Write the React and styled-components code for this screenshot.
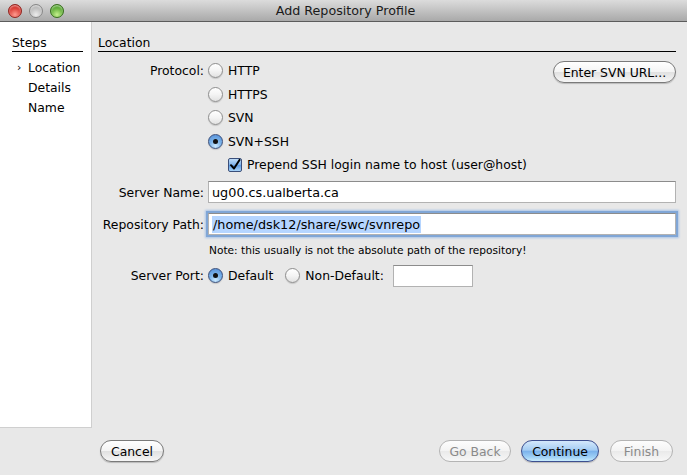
import React from "react";
import styled, { createGlobalStyle } from "styled-components";

const Global = createGlobalStyle`
  html, body { margin: 0; padding: 0; background: #e8e8e8; }
  body { font-family: "DejaVu Sans", "Liberation Sans", sans-serif; font-size: 12.4px; color: #000; }
  * { box-sizing: border-box; }
`;

const Window = styled.div`
  width: 687px;
  height: 475px;
  display: flex;
  flex-direction: column;
  background: #e8e8e8;
  overflow: hidden;
`;

const TitleBar = styled.div`
  height: 22px;
  flex: none;
  display: flex;
  align-items: center;
  background: linear-gradient(#dcdcdc, #a9a9a9);
  border-bottom: 1px solid #5c5c5c;
  padding-left: 8px;
`;

const Lights = styled.div`
  display: flex;
  gap: 7px;
  width: 0;
  overflow: visible;
`;

const Light = styled.span`
  flex: none;
  width: 14px;
  height: 14px;
  border-radius: 50%;
  border: 1px solid ${(p) => p.$edge};
  background: radial-gradient(circle at 50% 80%, ${(p) => p.$glow} 0%, ${(p) => p.$base} 65%),
    ${(p) => p.$base};
  box-shadow: inset 0 1px 2px rgba(255, 255, 255, 0.6);
`;

const Title = styled.div`
  flex: 1;
  text-align: center;
  font-size: 12.7px;
  color: #1a1a1a;
  padding-right: 4px;
`;

const Body = styled.div`
  flex: 1;
  display: flex;
  min-height: 0;
`;

const Sidebar = styled.div`
  width: 92px;
  flex: none;
  background: #fff;
  border-right: 1px solid #cfcfcf;
  border-bottom: 1px solid #cfcfcf;
  padding: 13px 8px 0 12px;
`;

const Heading = styled.div`
  height: 17px;
  line-height: 15px;
  border-bottom: 1px solid #000;
`;

const StepList = styled.div`
  display: flex;
  flex-direction: column;
  padding-top: 6px;
`;

const Step = styled.div`
  height: 20px;
  line-height: 20px;
  display: flex;
`;

const StepMark = styled.span`
  width: 16px;
  flex: none;
  font-size: 11px;
  padding-left: 5px;
`;

const Main = styled.div`
  flex: 1;
  padding: 13px 11px 0 6px;
  display: flex;
  flex-direction: column;
`;

const Form = styled.div`
  display: grid;
  grid-template-columns: 106px 1fr;
  column-gap: 4px;
  align-items: center;
`;

const Label = styled.div`
  text-align: right;
  white-space: nowrap;
  align-self: ${(p) => (p.$top ? "start" : "center")};
  line-height: ${(p) => (p.$top ? "23.5px" : "normal")};
  margin-top: ${(p) => p.$mt || 0}px;
`;

const Cell = styled.div`
  display: flex;
  align-items: ${(p) => (p.$top ? "flex-start" : "center")};
  margin-top: ${(p) => p.$mt || 0}px;
`;

const RadioColumn = styled.div`
  display: flex;
  flex-direction: column;
`;

const Option = styled.label`
  display: flex;
  align-items: center;
  height: ${(p) => p.$h || 23.5}px;
  gap: 5px;
  padding-left: ${(p) => p.$indent || 0}px;
  margin-right: ${(p) => p.$mr || 0}px;
  white-space: nowrap;
`;

const Radio = styled.span`
  flex: none;
  width: 15px;
  height: 15px;
  border-radius: 50%;
  display: flex;
  align-items: center;
  justify-content: center;
  border: 1px solid ${(p) => (p.$on ? "#3b4f7a" : "#8e8e8e")};
  background: ${(p) =>
    p.$on
      ? "radial-gradient(circle at 50% 85%, #cdeafe 0%, #7cb4ea 45%, #4f8ad6 100%)"
      : "linear-gradient(#ffffff, #f4f4f4 50%, #e2e2e2 100%)"};
  box-shadow: 0 1px 1px rgba(0, 0, 0, 0.15);
  &::after {
    content: "";
    display: ${(p) => (p.$on ? "block" : "none")};
    width: 5px;
    height: 5px;
    border-radius: 50%;
    background: #111;
  }
`;

const Check = styled.span`
  flex: none;
  width: 14px;
  height: 14px;
  border-radius: 2px;
  border: 1px solid #3b4f7a;
  background: linear-gradient(#bfdcf8, #7fb2ea 50%, #5c9ae2 51%, #a9d3f7);
  display: flex;
  align-items: center;
  justify-content: center;
`;

const PillButton = styled.button`
  font-family: inherit;
  font-size: 12.4px;
  height: 22px;
  width: ${(p) => p.$w}px;
  padding: 0;
  border-radius: 11px;
  border: 1px solid ${(p) => (p.$primary ? "#3d4f8f" : p.disabled ? "#b4b4b4" : "#7a7a7a")};
  color: ${(p) => (p.disabled ? "#8a8a8a" : "#000")};
  background: ${(p) =>
    p.$primary
      ? "linear-gradient(#d4e8fb 0%, #a5cdf3 45%, #7cb3ec 52%, #9fd0f6 80%, #c9ecfd 100%)"
      : p.disabled
      ? "linear-gradient(#fdfdfd, #f3f3f3 50%, #eaeaea 52%, #f7f7f7)"
      : "linear-gradient(#ffffff, #f4f4f4 48%, #e1e1e1 52%, #f6f6f6)"};
  box-shadow: ${(p) => (p.disabled ? "none" : "0 1px 1px rgba(0,0,0,0.2)")};
  white-space: nowrap;
  flex: none;
  margin-left: ${(p) => p.$ml || 0}px;
`;

const TopButton = styled(PillButton)`
  margin-left: auto;
  margin-top: 2px;
`;

const Field = styled.div`
  height: 22px;
  width: ${(p) => (p.$w ? `${p.$w}px` : "100%")};
  background: #fff;
  border: 1px solid #b2b2b2;
  border-top-color: #8c8c8c;
  display: flex;
  align-items: center;
  padding-left: 3px;
  font-size: 12.8px;
  box-shadow: ${(p) => (p.$focus ? "0 0 0 2px #80a6d6, 0 0 2px 3px #a9c4e6" : "none")};
`;

const Selected = styled.span`
  background: #b5d5ff;
  padding: 1px 1px;
`;

const Note = styled.div`
  font-size: 10.6px;
  padding-left: 1px;
`;

const Footer = styled.div`
  height: 47px;
  flex: none;
  display: flex;
  align-items: flex-start;
  padding: 12px 14px 0 100px;
`;

const Spacer = styled.div`
  flex: 1;
`;

const CheckMark = () => (
  <svg width="12" height="12" viewBox="0 0 12 12">
    <path d="M2 6.2 L5 9.5 L10.5 1" fill="none" stroke="#000" strokeWidth="2" strokeLinecap="round" strokeLinejoin="round" />
  </svg>
);

export default function App() {
  return (
    <Window>
      <Global />
      <TitleBar>
        <Lights>
          <Light $base="#d4322b" $glow="#ff9b8f" $edge="#8f2a25" />
          <Light $base="#b8b8b8" $glow="#ececec" $edge="#888" />
          <Light $base="#56a630" $glow="#c6f08e" $edge="#3c6f22" />
        </Lights>
        <Title>Add Repository Profile</Title>
      </TitleBar>
      <Body>
        <Sidebar>
          <Heading>Steps</Heading>
          <StepList>
            <Step><StepMark>›</StepMark>Location</Step>
            <Step><StepMark />Details</Step>
            <Step><StepMark />Name</Step>
          </StepList>
        </Sidebar>
        <Main>
          <Heading>Location</Heading>
          <Form>
            <Label $top $mt={7}>Protocol:</Label>
            <Cell $top $mt={7}>
              <RadioColumn>
                <Option><Radio />HTTP</Option>
                <Option><Radio />HTTPS</Option>
                <Option><Radio />SVN</Option>
                <Option><Radio $on />SVN+SSH</Option>
                <Option $indent={20} $h={23}>
                  <Check><CheckMark /></Check>Prepend SSH login name to host (user@host)
                </Option>
              </RadioColumn>
              <TopButton $w={123}>Enter SVN URL...</TopButton>
            </Cell>

            <Label $mt={5}>Server Name:</Label>
            <Cell $mt={5}>
              <Field>ug00.cs.ualberta.ca</Field>
            </Cell>

            <Label $mt={10}>Repository Path:</Label>
            <Cell $mt={10}>
              <Field $focus><Selected>/home/dsk12/share/swc/svnrepo</Selected></Field>
            </Cell>

            <div />
            <Cell $mt={9}>
              <Note>Note: this usually is not the absolute path of the repository!</Note>
            </Cell>

            <Label $mt={8}>Server Port:</Label>
            <Cell $mt={8}>
              <Option $mr={12}><Radio $on />Default</Option>
              <Option $mr={9}><Radio />Non-Default:</Option>
              <Field $w={80} />
            </Cell>
          </Form>
        </Main>
      </Body>
      <Footer>
        <PillButton $w={64}>Cancel</PillButton>
        <Spacer />
        <PillButton disabled $w={72}>Go Back</PillButton>
        <PillButton $primary $w={78} $ml={10}>Continue</PillButton>
        <PillButton disabled $w={63} $ml={11}>Finish</PillButton>
      </Footer>
    </Window>
  );
}
